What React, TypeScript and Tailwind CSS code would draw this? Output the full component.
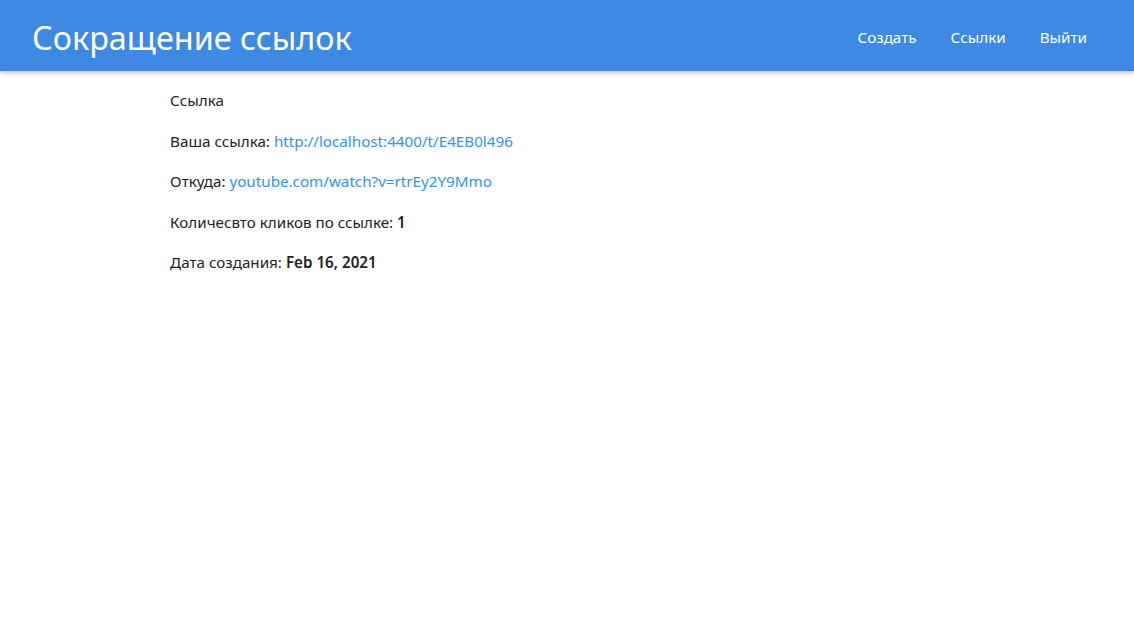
import React from "react";

export default function App() {
  return (
    <div className="min-h-[620px] bg-white" style={{ fontFamily: '"Noto Sans", "Open Sans", sans-serif' }}>
      <nav className="h-[71px] bg-[#3d89e3] text-white flex items-center justify-between pl-[32px] pr-[30px] pt-[3px] shadow-[0_2px_4px_rgba(0,0,0,0.25)] relative">
        <a className="text-[32.4px] leading-none text-white">Сокращение ссылок</a>
        <ul className="flex items-center text-[15.2px]">
          <li><a className="px-[17px] block">Создать</a></li>
          <li><a className="px-[17px] block">Ссылки</a></li>
          <li><a className="px-[17px] block">Выйти</a></li>
        </ul>
      </nav>
      <div className="w-[70%] mx-auto pt-[18px] text-[15.2px] leading-[22px] text-[#222] flex flex-col gap-[18.6px]">
        <p>Ссылка</p>
        <p>
          Ваша ссылка: <a className="text-[#2f95ea]">http://localhost:4400/t/E4EB0l496</a>
        </p>
        <p>
          Откуда: <a className="text-[#2f95ea]">youtube.com/watch?v=rtrEy2Y9Mmo</a>
        </p>
        <p>
          Количесвто кликов по ссылке: <strong className="font-semibold">1</strong>
        </p>
        <p>
          Дата создания: <strong className="font-semibold">Feb 16, 2021</strong>
        </p>
      </div>
    </div>
  );
}
